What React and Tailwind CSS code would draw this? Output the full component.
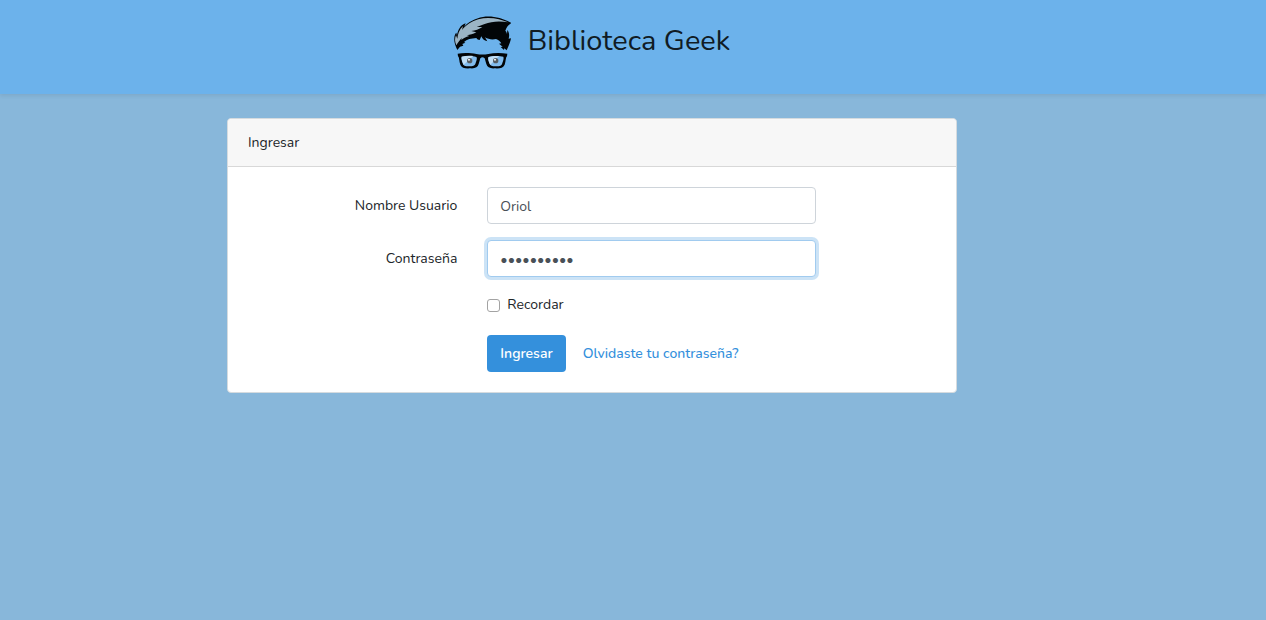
import { useState } from "react";

function Logo() {
  return (
    <svg viewBox="27 24 171 162" className="h-[54px] w-[57px] shrink-0" role="img" aria-label="Logo">
      <path
        d="M37 126 C30 112 27 100 28 91 C28 84 30 78 34 74 L36 82 C37 74 40 66 44 60 C48 53 55 49 62 46 L58 56 C68 43 91 31 114 27 C141 22 176 31 199 45 C191 50 184 57 181 68 C184 71 186 75 186 79 L187 66 C194 75 193 84 191 92 L198 91 C196 104 190 115 185 127 L178 121 L177 126 L167 117 L173 116 L162 107 L169 106 C166 100 160 96 153 93 C142 96 130 94 120 88 L127 100 C117 97 112 93 109 85 L104 96 C100 96 96 93 94 90 C78 91 66 94 57 102 L61 104 L52 108 L55 113 L45 116 Z"
        fill="#020507"
      />
      <path
        d="M34 112 C29 101 29 91 33 82 L37 92 C38 79 42 66 54 54 L51 66 C62 53 77 41 100 34 C132 25 166 33 189 43 C165 38 138 40 119 48 L95 57 L112 57 C102 64 91 68 79 69 L94 73 C84 79 75 80 66 82 L73 84 C62 87 55 90 49 96 L50 90 C44 97 39 103 34 112 Z"
        fill="#9bb4c4"
      />
      <path
        d="M38 137 C57 134 78 135 94 138 Q112 141 130 138 C147 134 168 134 187 137 L186 145 C182 147 183 158 179 170 C175 180 164 182 149 181 C135 182 127 178 124 168 L119 151 Q112 145 106 151 L101 168 C98 178 91 182 76 181 C60 182 50 180 46 170 C42 158 43 147 39 145 Z"
        fill="#020507"
      />
      <path d="M50 146 C62 143 82 143 94 147 C98 151 93 162 91 168 C88 175 79 175 71 175 C60 175 55 173 53 165 C50 157 48 150 50 146 Z" fill="#82bced" />
      <path d="M175 146 C163 143 143 143 131 147 C127 151 132 162 134 168 C137 175 146 175 154 175 C165 175 170 173 172 165 C175 157 177 150 175 146 Z" fill="#82bced" />
      <path d="M50 146 C61 143 74 143 85 144 L56 170 C52 163 49 152 50 146 Z" fill="#c0def5" />
      <path d="M131 147 C140 144 152 143 162 144 L136 170 C132 164 128 152 131 147 Z" fill="#c0def5" />
      <circle cx="74" cy="158" r="8" fill="#565d62" />
      <circle cx="152" cy="158" r="8" fill="#565d62" />
      <circle cx="72" cy="155" r="3" fill="#f5fafd" />
      <circle cx="150" cy="155" r="3" fill="#f5fafd" />
    </svg>
  );
}

const field =
  "block h-[37px] w-full rounded border bg-white px-3 pt-[2px] text-sm leading-6 text-[#495057] outline-none";

export default function App() {
  const [user, setUser] = useState("Oriol");
  const [password, setPassword] = useState("contrasena");
  const [remember, setRemember] = useState(false);

  return (
    <div className="min-h-screen bg-[#88b7da] font-['Nunito','Lato',sans-serif] text-sm leading-6 text-[#212529]">
      <header className="bg-[#6cb2eb] pt-4 pr-[82px] pb-6 shadow-[0_2px_4px_rgba(0,0,0,0.08)]">
        <div className="flex items-start justify-center gap-[17px]">
          <Logo />
          <h1 className="py-1 text-[29px] leading-[42px] font-normal text-[#101b24]">Biblioteca Geek</h1>
        </div>
      </header>

      <main className="py-6 pr-[82px]">
        <section className="mx-auto w-full max-w-[730px] rounded border border-[#d5dbdf] bg-white">
          <h2 className="rounded-t border-b border-[#d8d8d8] bg-[#f7f7f7] px-5 pt-3 pb-[11px]">Ingresar</h2>
          <form className="flex flex-col gap-4 px-[5px] py-5" onSubmit={(e) => e.preventDefault()}>
            <div className="flex items-center">
              <label htmlFor="user" className="w-1/3 px-[15px] text-right">
                Nombre Usuario
              </label>
              <div className="w-1/2 px-[15px]">
                <input
                  id="user"
                  type="text"
                  value={user}
                  onChange={(e) => setUser(e.target.value)}
                  className={`${field} border-[#ced4da]`}
                />
              </div>
            </div>
            <div className="flex items-center">
              <label htmlFor="password" className="w-1/3 px-[15px] text-right">
                Contraseña
              </label>
              <div className="w-1/2 px-[15px]">
                <input
                  id="password"
                  type="password"
                  value={password}
                  onChange={(e) => setPassword(e.target.value)}
                  className={`${field} border-[#a1cbef] shadow-[0_0_0_3px_rgba(52,144,220,0.25)]`}
                />
              </div>
            </div>
            <div className="ml-[33.333333%] px-[15px]">
              <label className="flex items-center gap-[7px] pb-[2px]">
                <input
                  type="checkbox"
                  checked={remember}
                  onChange={(e) => setRemember(e.target.checked)}
                  className="size-[13px] appearance-none rounded-[3px] border border-[#a3a3a3] bg-white checked:bg-[#3490dc]"
                />
                Recordar
              </label>
            </div>
            <div className="ml-[33.333333%] flex items-center gap-1 px-[15px]">
              <button type="submit" className="h-[37px] rounded bg-[#3490dc] px-[13px] font-semibold text-white">
                Ingresar
              </button>
              <a href="#recuperar" className="px-[13px] font-medium text-[#3490dc]">
                Olvidaste tu contraseña?
              </a>
            </div>
          </form>
        </section>
      </main>
    </div>
  );
}
